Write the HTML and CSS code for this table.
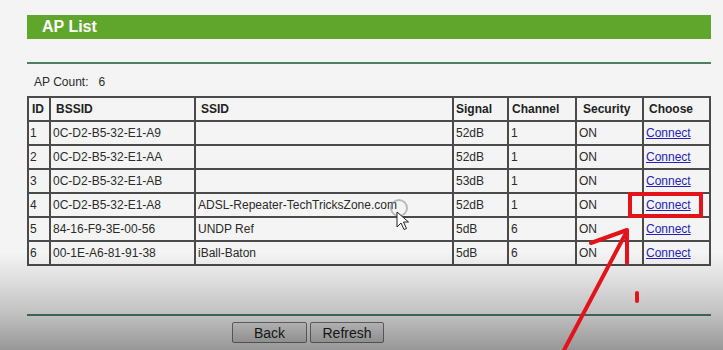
FILE: index.html
```html
<!DOCTYPE html>
<html>
<head>
<meta charset="utf-8">
<link rel="stylesheet" href="styles.css">
</head>
<body>
<div class="page">
  <div class="title-bar">AP List</div>
  <div class="rule rule-top"></div>
  <div class="count">AP Count:&nbsp;&nbsp; 6</div>
  <table class="ap-table">
    <thead>
      <tr>
        <th class="c-id">ID</th>
        <th class="c-bssid">BSSID</th>
        <th class="c-ssid">SSID</th>
        <th class="c-signal">Signal</th>
        <th class="c-channel">Channel</th>
        <th class="c-security">Security</th>
        <th class="c-choose">Choose</th>
      </tr>
    </thead>
    <tbody>
      <tr><td>1</td><td>0C-D2-B5-32-E1-A9</td><td></td><td>52dB</td><td>1</td><td>ON</td><td><a href="#">Connect</a></td></tr>
      <tr><td>2</td><td>0C-D2-B5-32-E1-AA</td><td></td><td>52dB</td><td>1</td><td>ON</td><td><a href="#">Connect</a></td></tr>
      <tr><td>3</td><td>0C-D2-B5-32-E1-AB</td><td></td><td>53dB</td><td>1</td><td>ON</td><td><a href="#">Connect</a></td></tr>
      <tr><td>4</td><td>0C-D2-B5-32-E1-A8</td><td>ADSL-Repeater-TechTricksZone.com</td><td>52dB</td><td>1</td><td>ON</td><td><a href="#">Connect</a></td></tr>
      <tr><td>5</td><td>84-16-F9-3E-00-56</td><td>UNDP Ref</td><td>5dB</td><td>6</td><td>ON</td><td><a href="#">Connect</a></td></tr>
      <tr><td>6</td><td>00-1E-A6-81-91-38</td><td>iBall-Baton</td><td>5dB</td><td>6</td><td>ON</td><td><a href="#">Connect</a></td></tr>
    </tbody>
  </table>
  <div class="rule rule-bottom"></div>
  <div class="buttons">
    <button class="btn btn-back">Back</button>
    <button class="btn btn-refresh">Refresh</button>
  </div>
</div>
<div class="shade"></div>
<svg class="annot" width="723" height="350" viewBox="0 0 723 350">
  <circle cx="399" cy="208" r="8" fill="none" stroke="rgba(140,140,140,0.55)" stroke-width="2"/>
  <path d="M397 212 L397 227 L401 223 L404 229.5 L406.5 228.5 L403.5 222 L408.5 222 Z" fill="#fff" stroke="#222" stroke-width="1" stroke-linejoin="round"/>
  <rect x="630" y="194" width="71" height="22" fill="none" stroke="#e3131c" stroke-width="4"/>
  <path d="M563 352 L627 231" stroke="#e3131c" stroke-width="4" fill="none" stroke-linecap="round"/>
  <path d="M591 243 L627 230 L627 263" stroke="#e3131c" stroke-width="4" fill="none" stroke-linecap="round" stroke-linejoin="round"/>
  <path d="M637 293 L637 301" stroke="#e3131c" stroke-width="4" stroke-linecap="round"/>
</svg>
</body>
</html>
```
FILE: styles.css
```css
html, body {
  margin: 0;
  padding: 0;
}
body {
  width: 723px;
  height: 350px;
  overflow: hidden;
  background: #f4f4f4;
  font-family: "Liberation Sans", Arial, sans-serif;
  color: #2b2b2b;
  position: relative;
}
.page {
  padding: 15px 0 0 27px;
  width: 684px;
}
.title-bar {
  height: 24px;
  line-height: 24px;
  background: #60a62d;
  color: #fff;
  font-weight: bold;
  font-size: 16px;
  padding-left: 15px;
}
.rule {
  height: 2px;
  background: #4f7e63;
}
.rule-top {
  margin-top: 23px;
}
.count {
  font-size: 12px;
  padding-left: 7px;
  margin-top: 11px;
  line-height: 14px;
  height: 21px;
}
.ap-table {
  border-collapse: separate;
  border-spacing: 0;
  border: 1px solid #4a4a4a;
  table-layout: fixed;
  width: 684px;
  font-size: 12px;
}
.ap-table th,
.ap-table td {
  border: 1px solid #4a4a4a;
  box-sizing: border-box;
  height: 24px;
  padding: 0 0 0 2px;
  text-align: left;
  vertical-align: middle;
  white-space: nowrap;
  overflow: hidden;
}
.ap-table th {
  font-weight: bold;
  color: #222;
}
.ap-table td:first-child {
  padding-left: 1px;
}
.c-id { width: 22px; padding-left: 3px !important; }
.c-bssid { width: 145px; padding-left: 5px !important; }
.c-ssid { width: 258px; padding-left: 5px !important; }
.c-signal { width: 55px; padding-left: 2px !important; }
.c-channel { width: 68px; padding-left: 3px !important; }
.c-security { width: 67px; padding-left: 6px !important; }
.c-choose { width: 67px; padding-left: 5px !important; }
.ap-table a {
  color: #2424b8;
  text-decoration: underline;
}
.rule-bottom {
  margin-top: 48px;
}
.buttons {
  display: flex;
  gap: 3px;
  padding-left: 205px;
  margin-top: 6px;
}
.btn {
  font-family: "Liberation Sans", Arial, sans-serif;
  font-size: 14px;
  color: #1e1e1e;
  background: linear-gradient(#ececec, #dadada);
  border: 1px solid #7a7a7a;
  border-radius: 2px;
  height: 21px;
  padding: 0;
}
.btn-back { width: 75px; }
.btn-refresh { width: 74px; }
.shade {
  position: absolute;
  left: 0;
  top: 252px;
  width: 723px;
  height: 98px;
  background: linear-gradient(rgba(0,0,0,0), rgba(0,0,0,0.08) 25%, rgba(0,0,0,0.22) 65%, rgba(0,0,0,0.38));
  pointer-events: none;
}
.annot {
  position: absolute;
  left: 0;
  top: 0;
  pointer-events: none;
}
```
